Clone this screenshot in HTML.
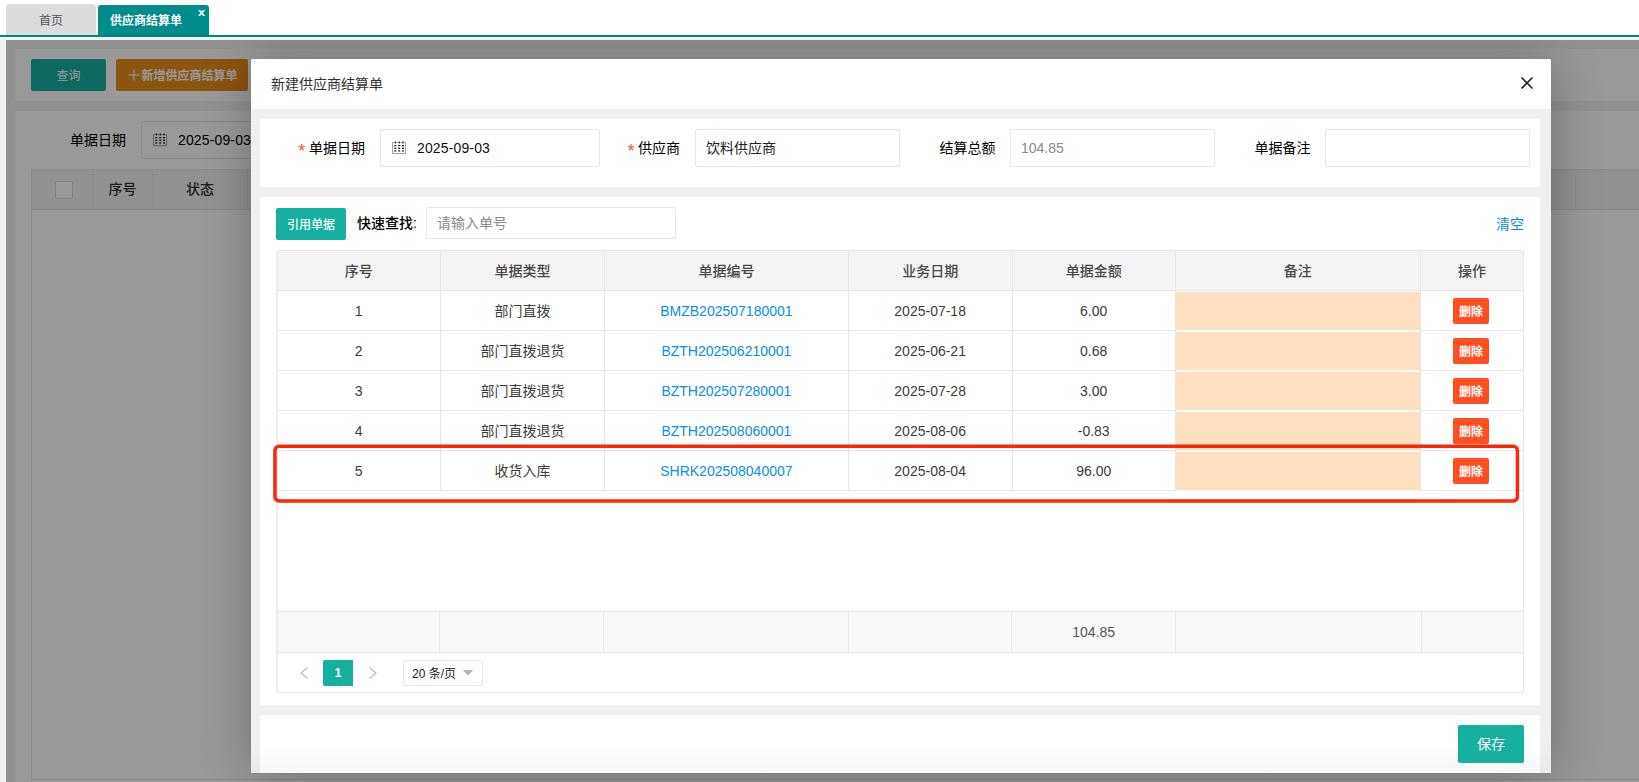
<!DOCTYPE html>
<html lang="zh-CN">
<head>
<meta charset="utf-8">
<title>供应商结算单</title>
<style>
*{box-sizing:border-box;margin:0;padding:0}
html,body{width:1639px;height:782px;overflow:hidden;background:#fff}
body{position:relative;font-family:"Liberation Sans","Noto Sans CJK SC",sans-serif;font-size:14px;color:#333}
.a{position:absolute}
.t{position:absolute;white-space:nowrap;line-height:20px;height:20px}
.c{text-align:center}
.inp{position:absolute;background:#fff;border:1px solid #e6e6e6;border-radius:2px}
.vl{position:absolute;width:1px;background:#e6e6e6}
.hl{position:absolute;height:1px;background:#e6e6e6}
.th{font-weight:500;color:#484848}
.lnk{color:#078fe0}
.td{color:#3c3c3c}
.del{position:absolute;width:36px;height:26px;background:#ff4f21;border-radius:2px;color:#fff;font-size:12px;font-weight:700;text-align:center;line-height:28px}
</style>
</head>
<body>
<!-- tabs -->
<div class="a" style="left:0;top:37px;width:1639px;height:745px;background:#f2f2f2"></div>
<div class="a" style="left:6px;top:4px;width:90px;height:31px;background:#dcdcdc;border-radius:3px 3px 0 0"></div>
<div class="t c" style="left:6px;top:11px;width:90px;font-size:12px;color:#555">首页</div>
<div class="a" style="left:98px;top:5px;width:111px;height:31px;background:#008c8a;border-radius:3px 3px 0 0"></div>
<div class="t" style="left:110px;top:11px;font-size:12px;color:#fff;font-weight:700">供应商结算单</div>
<div class="t" style="left:197.6px;top:2.4px;font-size:11px;color:#fff;font-weight:700;transform:scaleX(1.15);transform-origin:0 0">x</div>
<div class="a" style="left:0;top:35px;width:1639px;height:2px;background:#008583"></div>
<!-- page -->
<div class="a" id="page" style="left:6px;top:40px;width:1633px;height:742px;overflow:hidden;background:#f2f2f2">
 <div class="a" style="left:9px;top:9px;width:1700px;height:52px;background:#fff"></div>
 <div class="a" style="left:25px;top:19px;width:75px;height:32px;background:#16b09f;border-radius:2px"></div>
 <div class="t c" style="left:25px;top:26px;width:75px;font-size:12px;color:#fff">查询</div>
 <div class="a" style="left:110px;top:19px;width:132px;height:32px;background:#e68e1a;border-radius:2px"></div>
 <svg class="a" style="left:122px;top:29px" width="12" height="12" viewBox="0 0 12 12"><path d="M6 0.5V11.5M0.5 6H11.5" stroke="#fff" stroke-width="1" fill="none"/></svg>
 <div class="t" style="left:135.5px;top:26px;font-size:12px;color:#fff;font-weight:700">新增供应商结算单</div>
 <div class="a" style="left:9px;top:71px;width:1700px;height:700px;background:#fff"></div>
 <div class="t" style="left:64px;top:90px;color:#000">单据日期</div>
 <div class="inp" style="left:135px;top:81px;width:220px;height:38px"></div>
 <svg class="a" style="left:147px;top:93px" width="14" height="13" viewBox="0 0 14 13"><rect x="0.5" y="1.5" width="13" height="11" fill="none" stroke="#a6a6a6" stroke-width="1"/><g fill="#161616"><rect x="2.9" y="0.2" width="0.8" height="2.5"/><rect x="6.8" y="0.2" width="0.8" height="2.5"/><rect x="10.6" y="0.2" width="0.8" height="2.5"/><rect x="2.3" y="4.0" width="2" height="1.25"/><rect x="6.2" y="4.0" width="2" height="1.25"/><rect x="10.0" y="4.0" width="2" height="1.25"/><rect x="2.3" y="6.65" width="2" height="1.25"/><rect x="6.2" y="6.65" width="2" height="1.25"/><rect x="10.0" y="6.65" width="2" height="1.25"/><rect x="2.3" y="9.3" width="2" height="1.25"/><rect x="6.2" y="9.3" width="2" height="1.25"/><rect x="10.0" y="9.3" width="2" height="1.25"/></g></svg>
 <div class="t" style="left:172px;top:90px;color:#000;letter-spacing:0.14px">2025-09-03</div>
 <div class="a" style="left:25px;top:129px;width:1700px;height:611px;border:1px solid #e6e6e6;background:#fff"></div>
 <div class="a" style="left:26px;top:130px;width:1700px;height:40px;background:#f2f2f2;border-bottom:1px solid #e6e6e6"></div>
 <div class="vl" style="left:86px;top:130px;height:40px"></div>
 <div class="vl" style="left:146px;top:130px;height:40px"></div>
 <div class="vl" style="left:241px;top:130px;height:40px"></div>
 <div class="vl" style="left:1569px;top:130px;height:40px"></div>
 <div class="a" style="left:49px;top:141px;width:18px;height:18px;border:1px solid #d2d2d2;border-radius:2px;background:#fff"></div>
 <div class="t c th" style="left:87px;top:139px;width:59px;color:#333">序号</div>
 <div class="t c th" style="left:147px;top:139px;width:94px;color:#333">状态</div>
</div>
<!-- mask + dialog, clipped to page frame -->
<div class="a" style="left:6px;top:40px;width:1633px;height:742px;overflow:hidden">
<div class="a" style="left:0;top:0;width:1633px;height:742px;background:rgba(0,0,0,0.4)"></div>
<!-- dialog -->
<div class="a" id="dlg" style="left:245px;top:19px;width:1300px;height:713.5px;background:#f0f0f0;box-shadow:1px 1px 50px rgba(0,0,0,.3);border-radius:2px 2px 0 0">
 <div class="a" style="left:0;top:0;width:1300px;height:50px;background:#fff;border-radius:2px 2px 0 0"></div>
 <div class="a" style="left:9px;top:60.3px;width:1280px;height:67.7px;background:#fff"></div>
 <div class="a" style="left:9px;top:138px;width:1280px;height:507.5px;background:#fff"></div>
 <div class="a" style="left:9px;top:656px;width:1280px;height:57.5px;background:#fff"></div>
 <div class="a" style="left:0;top:683px;width:1300px;height:30.5px;background:linear-gradient(to bottom,rgba(0,0,0,0),rgba(0,0,0,0.03))"></div>
</div>
</div>
<div class="t" style="left:271px;top:74px;color:#333">新建供应商结算单</div>
<svg class="a" style="left:1520px;top:76px" width="14" height="14" viewBox="0 0 14 14"><path d="M1.5 1.5 L12.5 12.5 M12.5 1.5 L1.5 12.5" stroke="#22222e" stroke-width="1.6" fill="none"/></svg>
<!-- form -->
<div class="t" style="left:298.2px;top:140.5px;color:#ff5722;font-size:18px">*</div>
<div class="t" style="left:309px;top:138px;color:#000">单据日期</div>
<div class="inp" style="left:380px;top:129px;width:220px;height:38px"></div>
<svg class="a" style="left:392px;top:141px" width="14" height="13" viewBox="0 0 14 13"><rect x="0.5" y="1.5" width="13" height="11" fill="none" stroke="#a6a6a6" stroke-width="1"/><g fill="#161616"><rect x="2.9" y="0.2" width="0.8" height="2.5"/><rect x="6.8" y="0.2" width="0.8" height="2.5"/><rect x="10.6" y="0.2" width="0.8" height="2.5"/><rect x="2.3" y="4.0" width="2" height="1.25"/><rect x="6.2" y="4.0" width="2" height="1.25"/><rect x="10.0" y="4.0" width="2" height="1.25"/><rect x="2.3" y="6.65" width="2" height="1.25"/><rect x="6.2" y="6.65" width="2" height="1.25"/><rect x="10.0" y="6.65" width="2" height="1.25"/><rect x="2.3" y="9.3" width="2" height="1.25"/><rect x="6.2" y="9.3" width="2" height="1.25"/><rect x="10.0" y="9.3" width="2" height="1.25"/></g></svg>
<div class="t" style="left:417px;top:138px;color:#111;letter-spacing:0.14px">2025-09-03</div>
<div class="t" style="left:627.4px;top:140.5px;color:#ff5722;font-size:18px">*</div>
<div class="t" style="left:638px;top:138px;color:#000">供应商</div>
<div class="inp" style="left:695px;top:129px;width:205px;height:38px"></div>
<div class="t" style="left:706px;top:138px;color:#222">饮料供应商</div>
<div class="t" style="left:939.5px;top:138px;color:#000">结算总额</div>
<div class="inp" style="left:1010px;top:129px;width:205px;height:38px"></div>
<div class="t" style="left:1021px;top:138px;color:#888">104.85</div>
<div class="t" style="left:1254.5px;top:138px;color:#000">单据备注</div>
<div class="inp" style="left:1325px;top:129px;width:205px;height:38px"></div>
<!-- toolbar -->
<div class="a" style="left:276px;top:208px;width:70px;height:32px;background:#16b09f;border-radius:2px"></div>
<div class="t c" style="left:276px;top:215px;width:70px;font-size:12px;color:#fff;font-weight:500">引用单据</div>
<div class="t" style="left:357px;top:213px;color:#000;font-weight:500">快速查找:</div>
<div class="inp" style="left:426px;top:207px;width:250px;height:32px"></div>
<div class="t" style="left:437px;top:213px;color:#8a8a8a">请输入单号</div>
<div class="t" style="left:1496px;top:214px;color:#078fe0">清空</div>
<!-- table -->
<div class="a" style="left:277px;top:250px;width:1247px;height:443px;border:1px solid #e6e6e6;background:#fff;border-radius:2px"></div>
<div class="a" style="left:276px;top:252px;width:1px;height:439px;background:#f0f0f0"></div>
<div class="a" style="left:277px;top:252px;width:1px;height:439px;background:#ececec"></div>
<div class="a" style="left:278px;top:251px;width:1245px;height:39px;background:#f4f4f4"></div>
<div class="hl" style="left:278px;top:290px;width:1245px"></div>
<div class="t c th" style="left:277px;top:261px;width:163.5px">序号</div>
<div class="t c th" style="left:440.5px;top:261px;width:164.0px">单据类型</div>
<div class="t c th" style="left:604.5px;top:261px;width:243.79999999999995px">单据编号</div>
<div class="t c th" style="left:848.3px;top:261px;width:163.70000000000005px">业务日期</div>
<div class="t c th" style="left:1012px;top:261px;width:163.4000000000001px">单据金额</div>
<div class="t c th" style="left:1175.4px;top:261px;width:244.89999999999986px">备注</div>
<div class="t c th" style="left:1420.3px;top:261px;width:103.20000000000005px">操作</div>
<div class="vl" style="left:440px;top:251px;height:240px"></div>
<div class="vl" style="left:604px;top:251px;height:240px"></div>
<div class="vl" style="left:848px;top:251px;height:240px"></div>
<div class="vl" style="left:1012px;top:251px;height:240px"></div>
<div class="vl" style="left:1175px;top:251px;height:240px"></div>
<div class="vl" style="left:1420px;top:251px;height:240px"></div>
<div class="a" style="left:1176px;top:292px;width:244px;height:39px;background:#fde0c0"></div>
<div class="hl" style="left:278px;top:330px;width:1245px"></div>
<div class="hl" style="left:1176px;top:330px;width:244px;background:#fef8f1"></div>
<div class="t c td" style="left:277px;top:301px;width:163.5px">1</div>
<div class="t c td" style="left:440.5px;top:301px;width:164.0px">部门直拨</div>
<div class="t c lnk" style="left:604.5px;top:301px;width:243.79999999999995px">BMZB202507180001</div>
<div class="t c td" style="left:848.3px;top:301px;width:163.70000000000005px">2025-07-18</div>
<div class="t c td" style="left:1012px;top:301px;width:163.4000000000001px">6.00</div>
<div class="del" style="left:1453px;top:298px">删除</div>
<div class="a" style="left:1176px;top:332px;width:244px;height:39px;background:#fde0c0"></div>
<div class="hl" style="left:278px;top:370px;width:1245px"></div>
<div class="hl" style="left:1176px;top:370px;width:244px;background:#fef8f1"></div>
<div class="t c td" style="left:277px;top:341px;width:163.5px">2</div>
<div class="t c td" style="left:440.5px;top:341px;width:164.0px">部门直拨退货</div>
<div class="t c lnk" style="left:604.5px;top:341px;width:243.79999999999995px">BZTH202506210001</div>
<div class="t c td" style="left:848.3px;top:341px;width:163.70000000000005px">2025-06-21</div>
<div class="t c td" style="left:1012px;top:341px;width:163.4000000000001px">0.68</div>
<div class="del" style="left:1453px;top:338px">删除</div>
<div class="a" style="left:1176px;top:372px;width:244px;height:39px;background:#fde0c0"></div>
<div class="hl" style="left:278px;top:410px;width:1245px"></div>
<div class="hl" style="left:1176px;top:410px;width:244px;background:#fef8f1"></div>
<div class="t c td" style="left:277px;top:381px;width:163.5px">3</div>
<div class="t c td" style="left:440.5px;top:381px;width:164.0px">部门直拨退货</div>
<div class="t c lnk" style="left:604.5px;top:381px;width:243.79999999999995px">BZTH202507280001</div>
<div class="t c td" style="left:848.3px;top:381px;width:163.70000000000005px">2025-07-28</div>
<div class="t c td" style="left:1012px;top:381px;width:163.4000000000001px">3.00</div>
<div class="del" style="left:1453px;top:378px">删除</div>
<div class="a" style="left:1176px;top:412px;width:244px;height:39px;background:#fde0c0"></div>
<div class="hl" style="left:278px;top:450px;width:1245px"></div>
<div class="hl" style="left:1176px;top:450px;width:244px;background:#fef8f1"></div>
<div class="t c td" style="left:277px;top:421px;width:163.5px">4</div>
<div class="t c td" style="left:440.5px;top:421px;width:164.0px">部门直拨退货</div>
<div class="t c lnk" style="left:604.5px;top:421px;width:243.79999999999995px">BZTH202508060001</div>
<div class="t c td" style="left:848.3px;top:421px;width:163.70000000000005px">2025-08-06</div>
<div class="t c td" style="left:1012px;top:421px;width:163.4000000000001px">-0.83</div>
<div class="del" style="left:1453px;top:418px">删除</div>
<div class="a" style="left:1176px;top:452px;width:244px;height:39px;background:#fde0c0"></div>
<div class="hl" style="left:278px;top:490px;width:1245px"></div>
<div class="hl" style="left:1176px;top:490px;width:244px;background:#fef8f1"></div>
<div class="t c td" style="left:277px;top:461px;width:163.5px">5</div>
<div class="t c td" style="left:440.5px;top:461px;width:164.0px">收货入库</div>
<div class="t c lnk" style="left:604.5px;top:461px;width:243.79999999999995px">SHRK202508040007</div>
<div class="t c td" style="left:848.3px;top:461px;width:163.70000000000005px">2025-08-04</div>
<div class="t c td" style="left:1012px;top:461px;width:163.4000000000001px">96.00</div>
<div class="del" style="left:1453px;top:458px">删除</div>
<div class="a" style="left:278px;top:611px;width:1245px;height:42px;background:#f9f9f9;border-top:1px solid #e6e6e6;border-bottom:1px solid #e6e6e6"></div>
<div class="vl" style="left:439px;top:612px;height:40px"></div>
<div class="vl" style="left:603px;top:612px;height:40px"></div>
<div class="vl" style="left:848px;top:612px;height:40px"></div>
<div class="vl" style="left:1011px;top:612px;height:40px"></div>
<div class="vl" style="left:1175px;top:612px;height:40px"></div>
<div class="vl" style="left:1421px;top:612px;height:40px"></div>
<div class="t c" style="left:1012px;top:622px;width:163.4px;color:#555">104.85</div>
<!-- pager -->
<svg class="a" style="left:299px;top:666px" width="10" height="14" viewBox="0 0 10 14"><path d="M8.5 1.5 L2 7 L8.5 12.5" fill="none" stroke="#bbb" stroke-width="1.2"/></svg>
<div class="a" style="left:323px;top:660px;width:30px;height:26px;background:#16b09f;border-radius:2px 0 0 2px"></div>
<div class="t c" style="left:323px;top:663px;width:30px;font-size:12px;color:#fff;font-weight:700">1</div>
<svg class="a" style="left:368px;top:666px" width="10" height="14" viewBox="0 0 10 14"><path d="M1.5 1.5 L8 7 L1.5 12.5" fill="none" stroke="#bbb" stroke-width="1.2"/></svg>
<div class="inp" style="left:403px;top:660px;width:79.5px;height:26px"></div>
<div class="t" style="left:412px;top:663.5px;font-size:12px;color:#222">20 条/页</div>
<svg class="a" style="left:462px;top:670px" width="12" height="6" viewBox="0 0 12 6"><path d="M0.8 0 L11.2 0 L6 5.6 Z" fill="#b2b2b2"/></svg>
<!-- footer -->
<div class="a" style="left:1458px;top:725px;width:66px;height:38px;background:#16b09f;border-radius:2px"></div>
<div class="t c" style="left:1458px;top:734px;width:66px;color:#fff">保存</div>
<!-- red annotation -->
<svg class="a" style="left:270px;top:440px" width="1255" height="68" viewBox="0 0 1255 68"><rect x="4.95" y="6.35" width="1242.5" height="54.6" rx="4.2" ry="4.2" fill="none" stroke="#ff2606" stroke-width="3.5"/></svg>
</body>
</html>
